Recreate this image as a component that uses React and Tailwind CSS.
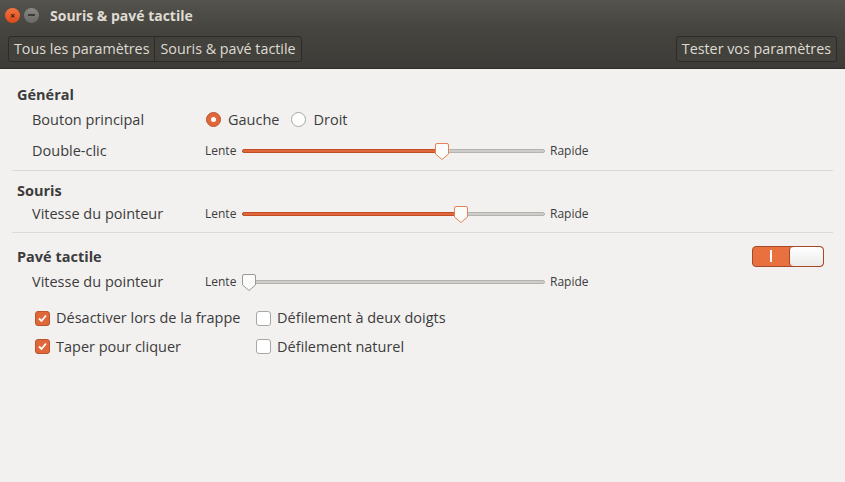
import React from 'react';

const font = { fontFamily: '"Open Sans", "Noto Sans", sans-serif' };

const Thumb = ({ accent }) => (
  <svg width="16" height="19" viewBox="0 0 16 19" className="absolute -top-[8px]">
    <path
      d="M3 1.5 H13 Q14.5 1.5 14.5 3 V12 L8 17.5 L1.5 12 V3 Q1.5 1.5 3 1.5 Z"
      fill="#fbfbfa"
      stroke={accent ? '#e2835c' : '#9a9893'}
      strokeWidth="1"
    />
  </svg>
);

const Slider = ({ pos }) => (
  <div className="flex items-center">
    <span className="text-[12px] text-[#3c3c3c] w-[37px]">Lente</span>
    <div className="relative w-[303px] h-[4px] rounded-full bg-[#cfcdca] border border-[#b5b3af]">
      <div
        className="absolute -left-px -top-px h-[4px] rounded-full bg-[#e0673a] border border-[#c04f25]"
        style={{ width: pos }}
      />
      <div className="absolute top-0" style={{ left: pos - 8 }}>
        <Thumb accent={pos > 20} />
      </div>
    </div>
    <span className="text-[12px] text-[#3c3c3c] ml-[5px]">Rapide</span>
  </div>
);

const Radio = ({ checked, label }) => (
  <div className="flex items-center">
    <span
      className={
        checked
          ? 'w-[15px] h-[15px] rounded-full bg-[#e0673a] border border-[#b9552c] flex items-center justify-center'
          : 'w-[15px] h-[15px] rounded-full bg-white border border-[#a9a7a3]'
      }
    >
      {checked && <span className="w-[5px] h-[5px] rounded-full bg-white" />}
    </span>
    <span className="ml-[7px] text-[14.5px] text-[#3c3c3c]">{label}</span>
  </div>
);

const Check = ({ checked, label }) => (
  <div className="flex items-center">
    <span
      className={
        checked
          ? 'w-[15px] h-[15px] rounded-[3px] bg-[#e0673a] border border-[#b9552c] flex items-center justify-center'
          : 'w-[15px] h-[15px] rounded-[3px] bg-white border border-[#a9a7a3]'
      }
    >
      {checked && (
        <svg width="11" height="11" viewBox="0 0 11 11">
          <path d="M2 5.5 L4.5 8 L9 2.5" fill="none" stroke="white" strokeWidth="1.8" />
        </svg>
      )}
    </span>
    <span className="ml-[6px] text-[14.5px] text-[#3c3c3c]">{label}</span>
  </div>
);

const Row = ({ label, children, className = '' }) => (
  <div className={`flex items-center pl-[32px] ${className}`}>
    <span className="w-[173px] text-[14.5px] text-[#3c3c3c]">{label}</span>
    {children}
  </div>
);

const Heading = ({ children }) => (
  <div className="pl-[17px] text-[14.5px] font-bold text-[#3c3c3c]">{children}</div>
);

export default function App() {
  return (
    <div className="w-[845px] h-[482px] flex flex-col bg-[#f2f1f0] overflow-hidden" style={font}>
      {/* title bar */}
      <div className="h-[30px] flex items-center bg-gradient-to-b from-[#55534d] to-[#45443f] px-[5px]">
        <span className="w-[15px] h-[15px] rounded-full bg-gradient-to-b from-[#f5743f] to-[#d9481a] flex items-center justify-center text-[#3a1a0c] text-[9px] leading-none font-bold">
          ×
        </span>
        <span className="ml-[4px] w-[15px] h-[15px] rounded-full bg-gradient-to-b from-[#8a8884] to-[#6b6965] flex items-center justify-center">
          <span className="w-[7px] h-[1.5px] bg-[#3c3b37]" />
        </span>
        <span className="ml-[11px] text-[14px] font-bold text-[#dfdbd2]">Souris &amp; pavé tactile</span>
      </div>

      {/* toolbar */}
      <div className="h-[39px] flex items-center justify-between px-[8px] bg-gradient-to-b from-[#45443f] to-[#3c3b37] border-b border-[#2f2e2b]">
        <div className="flex h-[26px] rounded-[3px] border border-[#2c2b28] bg-[#42413c] text-[14.3px] text-[#dfdbd2]">
          <span className="px-[5px] flex items-center border-r border-[#2c2b28]">Tous les paramètres</span>
          <span className="px-[5px] flex items-center">Souris &amp; pavé tactile</span>
        </div>
        <div className="flex h-[26px] items-center rounded-[3px] border border-[#2c2b28] bg-[#42413c] px-[5px] text-[14.3px] text-[#dfdbd2]">
          Tester vos paramètres
        </div>
      </div>

      {/* content */}
      <div className="flex flex-col pt-[15px]">
        <Heading>Général</Heading>
        <Row label="Bouton principal" className="mt-[3px] h-[22px]">
          <div className="flex items-center gap-[12px] pl-[1px]">
            <Radio checked label="Gauche" />
            <Radio label="Droit" />
          </div>
        </Row>
        <Row label="Double-clic" className="mt-[9px] h-[22px]">
          <Slider pos={199} />
        </Row>
        <div className="mx-[12px] mt-[8px] h-px bg-[#dcdad5]" />

        <div className="mt-[9px]">
          <Heading>Souris</Heading>
        </div>
        <Row label="Vitesse du pointeur" className="mt-[1px] h-[22px]">
          <Slider pos={218} />
        </Row>
        <div className="mx-[12px] mt-[7px] h-px bg-[#dcdad5]" />

        <div className="mt-[13px] flex items-center justify-between pr-[21px]">
          <Heading>Pavé tactile</Heading>
          <div className="w-[72px] h-[21px] rounded-[4px] border border-[#a4492a] bg-[#e9703f] flex overflow-hidden">
            <div className="flex-1 flex items-center justify-center">
              <span className="w-[2px] h-[12px] bg-white" />
            </div>
            <div className="w-[34px] h-full rounded-[4px] bg-gradient-to-b from-white to-[#ecebea] border-l border-[#a4492a]" />
          </div>
        </div>
        <Row label="Vitesse du pointeur" className="mt-[4px] h-[22px]">
          <Slider pos={6} />
        </Row>

        <div className="mt-[14px] pl-[35px] grid grid-cols-[221px_auto] gap-y-[7px]">
          <Check checked label="Désactiver lors de la frappe" />
          <Check label="Défilement à deux doigts" />
          <Check checked label="Taper pour cliquer" />
          <Check label="Défilement naturel" />
        </div>
      </div>
    </div>
  );
}
